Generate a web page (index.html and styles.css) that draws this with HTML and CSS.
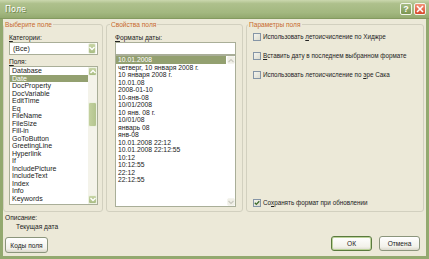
FILE: index.html
```html
<!DOCTYPE html>
<html lang="ru">
<head>
  <meta charset="UTF-8" />
  <title>Поле</title>
  <link rel="stylesheet" href="styles.css">
</head>
<body>
<div class="window">

  <!-- title bar -->
  <div class="titlebar">
    <span class="title">Поле</span>
    <span class="tb-btn help">?</span>
    <span class="tb-btn close">
      <svg width="8" height="8" viewBox="0 0 8 8"><path d="M1 1 L7 7 M7 1 L1 7" stroke="#fff" stroke-width="1.6"/></svg>
    </span>
  </div>

  <div class="frame">

    <!-- left column -->
    <div class="col-left">
      <fieldset class="group group-left">
        <legend>Выберите поле</legend>
        <label class="lbl"><u>К</u>атегории:</label>
        <div class="combo">
          <span class="combo-value">(Все)</span>
          <span class="sb-btn combo-btn">
            <svg width="6" height="5" viewBox="0 0 6 5"><path d="M0.5 1 L3 3.5 L5.5 1" fill="none" stroke="#fff" stroke-width="1.4"/></svg>
          </span>
        </div>
        <label class="lbl lbl-fields"><u>П</u>оля:</label>
        <div class="listbox list-fields">
          <ul class="items">
            <li>Database</li>
            <li class="selected">Date</li>
            <li>DocProperty</li>
            <li>DocVariable</li>
            <li>EditTime</li>
            <li>Eq</li>
            <li>FileName</li>
            <li>FileSize</li>
            <li>Fill-in</li>
            <li>GoToButton</li>
            <li>GreetingLine</li>
            <li>Hyperlink</li>
            <li>If</li>
            <li>IncludePicture</li>
            <li>IncludeText</li>
            <li>Index</li>
            <li>Info</li>
            <li>Keywords</li>
          </ul>
          <div class="scrollbar">
            <span class="sb-btn">
              <svg width="6" height="5" viewBox="0 0 6 5"><path d="M0.5 4 L3 1.5 L5.5 4" fill="none" stroke="#fff" stroke-width="1.4"/></svg>
            </span>
            <div class="sb-track"><span class="sb-thumb"></span></div>
            <span class="sb-btn">
              <svg width="6" height="5" viewBox="0 0 6 5"><path d="M0.5 1 L3 3.5 L5.5 1" fill="none" stroke="#fff" stroke-width="1.4"/></svg>
            </span>
          </div>
        </div>
      </fieldset>
      <div class="desc-title">Описание:</div>
      <div class="desc-text">Текущая дата</div>
      <button class="btn btn-codes">Ко<u>д</u>ы поля</button>
    </div>

    <!-- middle column -->
    <fieldset class="group group-mid">
      <legend>Свойства поля</legend>
      <label class="lbl"><u>Ф</u>орматы даты:</label>
      <div class="textbox"></div>
      <div class="listbox list-formats">
        <ul class="items">
          <li class="selected">10.01.2008</li>
          <li>четверг, 10 января 2008 г.</li>
          <li>10 января 2008 г.</li>
          <li>10.01.08</li>
          <li>2008-01-10</li>
          <li>10-янв-08</li>
          <li>10/01/2008</li>
          <li>10 янв. 08 г.</li>
          <li>10/01/08</li>
          <li>январь 08</li>
          <li>янв-08</li>
          <li>10.01.2008 22:12</li>
          <li>10.01.2008 22:12:55</li>
          <li>10:12</li>
          <li>10:12:55</li>
          <li>22:12</li>
          <li>22:12:55</li>
        </ul>
        <div class="scrollbar disabled">
          <span class="sb-btn">
            <svg width="6" height="5" viewBox="0 0 6 5"><path d="M0.5 4 L3 1.5 L5.5 4" fill="none" stroke="#c9c9bf" stroke-width="1.2"/></svg>
          </span>
          <div class="sb-track"></div>
          <span class="sb-btn">
            <svg width="6" height="5" viewBox="0 0 6 5"><path d="M0.5 1 L3 3.5 L5.5 1" fill="none" stroke="#c9c9bf" stroke-width="1.2"/></svg>
          </span>
        </div>
      </div>
    </fieldset>

    <!-- right column -->
    <fieldset class="group group-right">
      <legend>Параметры поля</legend>
      <div class="check"><span class="box"></span><span>Использовать <u>л</u>етоисчисление по Хиджре</span></div>
      <div class="check"><span class="box"></span><span><u>В</u>ставить дату в последнем выбранном формате</span></div>
      <div class="check"><span class="box"></span><span>Использовать летоисчисление по <u>э</u>ре Сака</span></div>
      <div class="check check-last">
        <span class="box checked">
          <svg width="6" height="6" viewBox="0 0 6 6"><path d="M0.8 2.8 L2.3 4.4 L5.3 1.2" fill="none" stroke="#3d6b2a" stroke-width="1.3"/></svg>
        </span>
        <span>Со<u>х</u>ранять формат при обновлении</span>
      </div>
    </fieldset>

    <div class="foot">
      <button class="btn btn-default">ОК</button>
      <button class="btn">Отмена</button>
    </div>

  </div>
</div>
</body>
</html>
```

FILE: styles.css
```css
* { box-sizing: border-box; }
html, body { margin: 0; padding: 0; }
body { width: 429px; height: 259px; overflow: hidden; background: #ece9d8; font-family: "Liberation Sans", Arial, sans-serif; font-size: 7px; color: #222; }
u { text-decoration: underline; }

.window { width: 429px; height: 259px; display: flex; flex-direction: column; }

/* title bar */
.titlebar { flex: none; height: 19px; display: flex; align-items: center; gap: 2px; padding: 0 3px 0 5px; background: linear-gradient(#cbd8ae, #aec08c 20%, #a3b880 70%, #93a96f); border-bottom: 1px solid #849a60; }
.title { flex: 1; color: #fff; font-family: "DejaVu Sans", sans-serif; font-size: 8px; text-shadow: 1px 1px 0 #70854f; }
.tb-btn { width: 12px; height: 12px; display: flex; align-items: center; justify-content: center; border: 1px solid #f3f6ec; border-radius: 2px; }
.help { background: linear-gradient(#a8bd84, #7b9550); color: #fff; font-weight: bold; font-size: 9px; line-height: 1; }
.close { background: linear-gradient(#f2957a, #d8492d); }

/* dialog body */
.frame { flex: 1; display: grid; grid-template-columns: 100px 137px 1fr; grid-template-rows: 192px 1fr; column-gap: 3px; padding: 1px 2px 0 0; border: 3px solid #93a96f; border-top: 0; }

.group { margin: 0; min-width: 0; border: 1px solid #d2d0bf; border-radius: 3px; }
.group legend { margin-left: -5px; padding: 0 1px; line-height: 9px; font-size: 6.6px; color: #c76a2d; }
.lbl { display: block; line-height: 9px; margin-top: 4px; font-size: 6.6px; }

.col-left { grid-row: 1 / 3; display: flex; flex-direction: column; align-items: flex-start; }
.group-left { height: 192px; width: 100%; flex: none; padding: 0 4px 0 5px; }
.lbl-fields { margin-top: 2px; }

.combo { height: 13px; display: flex; align-items: center; justify-content: space-between; padding: 0 1px 0 3px; background: #fff; border: 1px solid #a9ae98; }
.textbox { height: 13px; background: #fff; border: 1px solid #a9ae98; }

.listbox { display: flex; background: #fff; border: 1px solid #a9ae98; }
.list-fields { height: 139px; }
.items { flex: 1; margin: 0; padding: 0; list-style: none; overflow: hidden; }
.items li { line-height: 7.5px; padding-left: 2px; white-space: nowrap; }
.items li.selected { background: #93a070; color: #fff; }

.scrollbar { width: 9px; display: flex; flex-direction: column; background: #f4f3ea; }
.sb-btn { flex: none; width: 9px; height: 9px; display: flex; align-items: center; justify-content: center; border: 1px solid #eef2e2; border-radius: 2px; background: linear-gradient(#c8d5a6, #a9bd84); }
.combo-btn { width: 8px; height: 11px; }
.sb-track { flex: 1; display: flex; flex-direction: column; }
.sb-thumb { margin-top: 26px; height: 25px; border: 1px solid #eef2e2; border-radius: 2px; background: linear-gradient(90deg, #c3d19f, #b3c48e); }
.scrollbar.disabled { width: 8px; background: #fff; }
.scrollbar.disabled .sb-btn { width: 8px; height: 8px; border-color: #f4f4ee; background: #f1f0e8; }

.desc-title { line-height: 9px; margin-top: 1px; padding-left: 2px; font-size: 6.6px; }
.desc-text { line-height: 9px; padding-left: 13px; font-size: 6.6px; }

/* middle */
.group-mid { padding: 0 6px 4px 8px; }
.list-formats { height: 152px; }
.list-formats .items li { font-size: 6.8px; }
.list-formats .items li.selected { margin-right: 1px; }

/* right */
.group-right { display: flex; flex-direction: column; padding: 0 4px 4px 6px; }
.check { display: flex; align-items: center; gap: 2px; line-height: 9px; margin-top: 10px; font-size: 6.3px; white-space: nowrap; }
.check:first-of-type { margin-top: 3px; }
.check-last { margin-top: auto; }
.box { flex: none; width: 8px; height: 8px; display: flex; align-items: center; justify-content: center; border: 1px solid #8595a6; background: linear-gradient(135deg, #f4f4ee, #dcdcd0); }

/* buttons */
.btn { height: 16px; padding: 0; font: inherit; font-size: 6.6px; color: #222; border: 1px solid #8b957c; border-radius: 3px; background: linear-gradient(#ffffff, #f2f1ea 75%, #dad8cb); }
.btn-codes { width: 43px; margin: 6px 0 0 2px; }
.foot { grid-column: 2 / 4; display: flex; justify-content: flex-end; align-items: flex-start; gap: 7px; padding: 24px 4px 0 0; }
.foot .btn { width: 41px; height: 15px; }
.btn-default { border-color: #5a7a3e; box-shadow: inset 0 0 0 1px #bcd39a; }
```
